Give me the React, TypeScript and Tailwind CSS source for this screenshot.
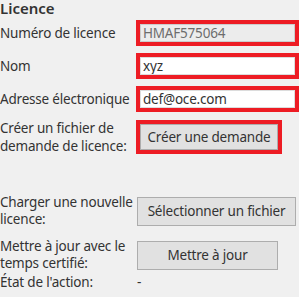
import React from 'react';

const font = { fontFamily: '"Noto Sans", "Open Sans", sans-serif' };

function Field({ label, value, disabled }: { label: string; value: string; disabled?: boolean }) {
    return (
        <div className="flex h-[26px] items-center">
            <div className="w-[136px] shrink-0 leading-[17px]">{label}</div>
            <div className="flex h-[26px] flex-1 border-4 border-[#ed1c24]">
                <input
                    readOnly
                    value={value}
                    className={`h-full w-full border px-[2px] text-[13.5px] leading-4 tracking-[-0.2px] outline-none ${disabled
                            ? 'border-[#cccccc] bg-[#ececec] text-[#6d6d6d]'
                            : 'border-[#dcdcdc] bg-white text-[#333333]'
                        }`}
                />
            </div>
        </div>
    );
}

export default function App() {
    return (
        <div className="h-[297px] w-[299px] overflow-hidden bg-[#f0f0f0] text-[13.5px] tracking-[-0.2px] text-[#333333]" style={font}>
            <div className="h-5 text-[15px] font-semibold leading-4 tracking-normal text-[#333333]">Licence</div>

            <div className="flex flex-col gap-[7px]">
                <Field label="Numéro de licence" value="HMAF575064" disabled />
                <Field label="Nom" value="xyz" />
                <Field label="Adresse électronique" value="def@oce.com" />
            </div>

            <div className="mt-[7px] flex h-[36px] items-center">
                <div className="w-[136px] shrink-0 pr-1 leading-[18px]">Créer un fichier de demande de licence:</div>
                <div className="border-4 border-[#ed1c24]">
                    <button className="h-[26px] w-[138px] border border-[#adadad] bg-[#e1e1e1] text-[13.5px] text-[#333333]">
                        Créer une demande
                    </button>
                </div>
            </div>

            <div className="mt-[39px] flex h-[34px] items-center">
                <div className="w-[137px] shrink-0 pr-1 leading-[17px]">Charger une nouvelle licence:</div>
                <button className="h-[29px] w-[159px] border border-[#adadad] bg-[#e1e1e1] text-[13.5px] text-[#333333]">
                    Sélectionner un fichier
                </button>
            </div>

            <div className="mt-[10px] flex h-[34px] items-center">
                <div className="w-[137px] shrink-0 pr-1 leading-[17px]">Mettre à jour avec le temps certifié:</div>
                <button className="h-[29px] w-[141px] border border-[#adadad] bg-[#e1e1e1] text-[13.5px] text-[#333333]">
                    Mettre à jour
                </button>
            </div>

            <div className="mt-[2px] flex h-[17px] items-center leading-[17px]">
                <div className="w-[137px] shrink-0">État de l'action:</div>
                <div>-</div>
            </div>
        </div>
    );
}
